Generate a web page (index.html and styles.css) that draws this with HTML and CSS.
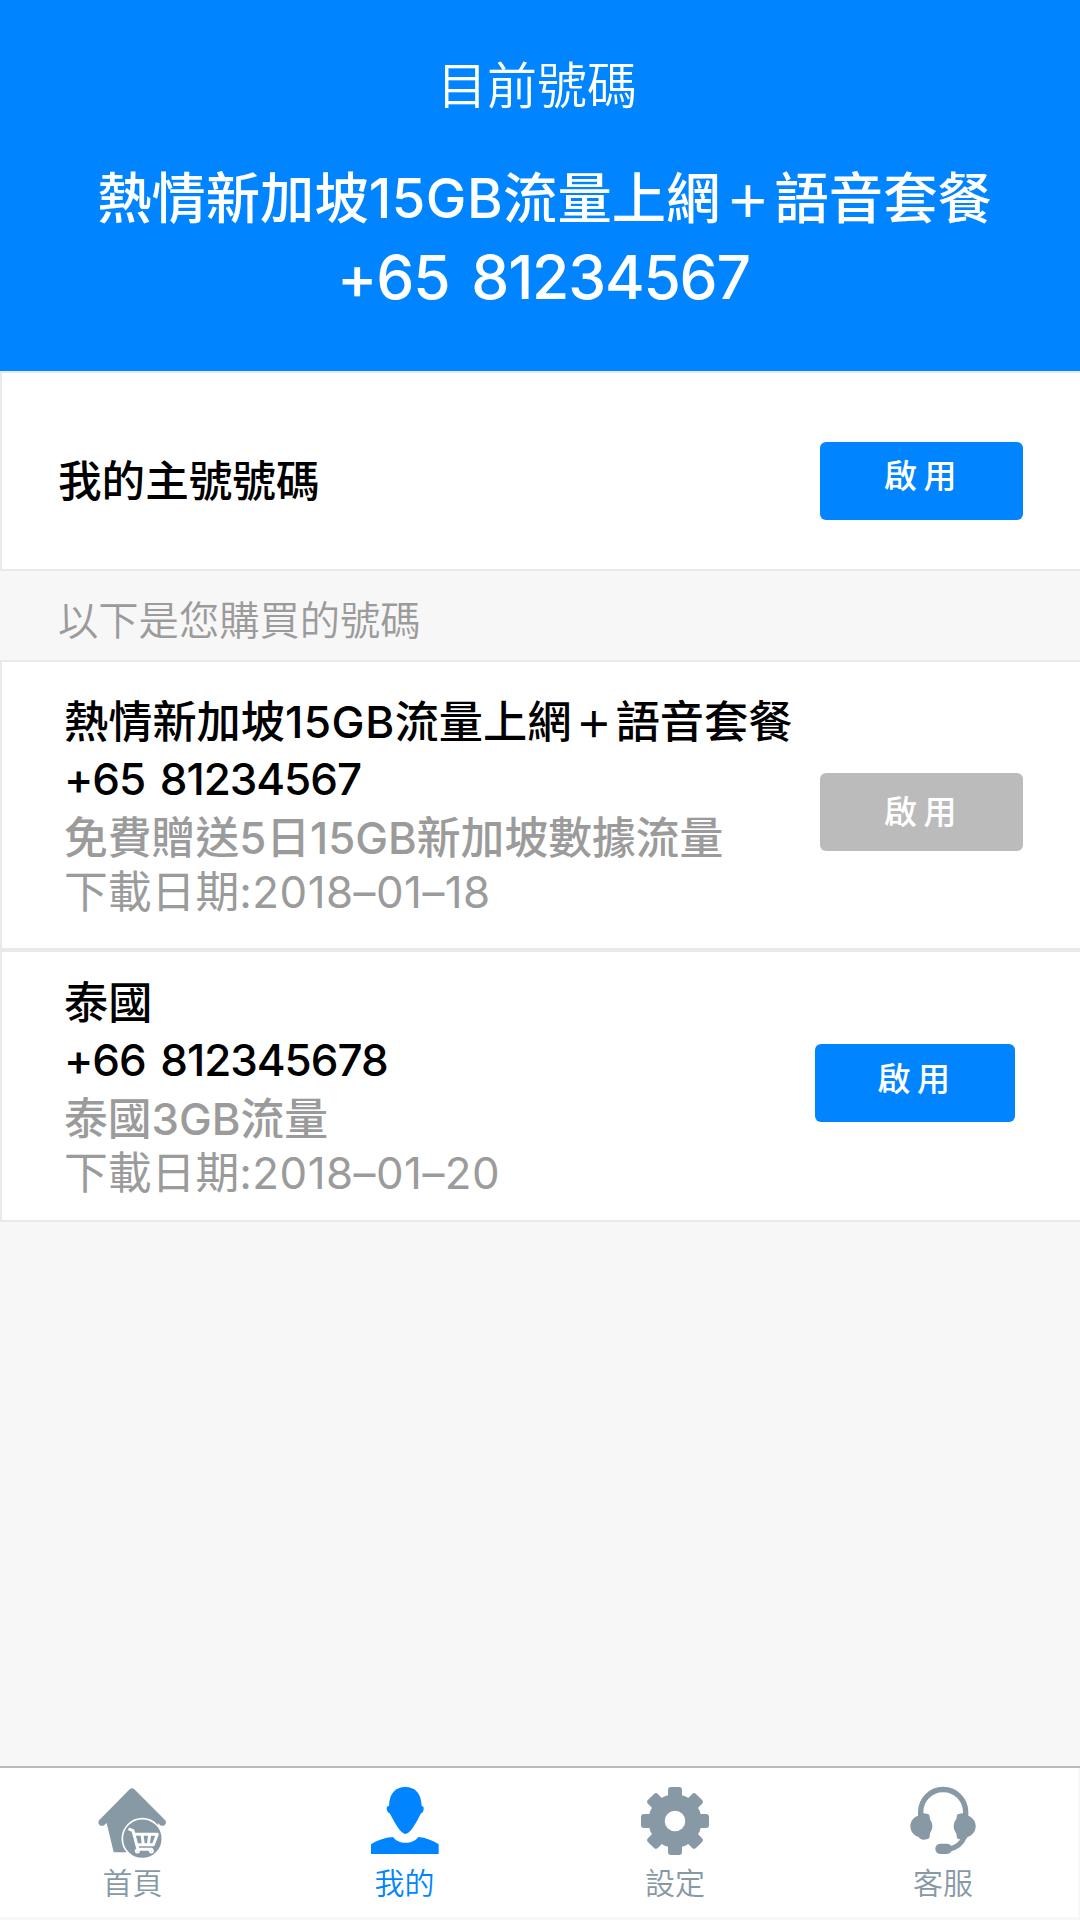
FILE: index.html
```html
<!DOCTYPE html>
<html lang="zh-Hant">

<head>
  <meta charset="UTF-8">
  <meta name="viewport" content="width=device-width, initial-scale=1.0">
  <title>我的號碼</title>
  <link rel="stylesheet" href="styles.css">
</head>

<body>
  <header class="current">
    <h1>目前號碼</h1>
    <p class="current-plan">熱情新加坡<span class="latin">15GB</span>流量上網<span class="plus">＋</span>語音套餐</p>
    <p class="current-number">+65 81234567</p>
  </header>

  <main>
    <section class="card main-number">
      <h2>我的主號號碼</h2>
      <button class="btn">啟用</button>
    </section>

    <p class="section-label">以下是您購買的號碼</p>

    <section class="card plan">
      <div class="plan-info">
        <h2>熱情新加坡<span class="latin">15GB</span>流量上網<span class="plus">＋</span>語音套餐</h2>
        <p class="phone">+65 81234567</p>
        <p class="desc">免費贈送5日15GB新加坡數據流量</p>
        <p class="date">下載日期<span class="latin">:2018–01–18</span></p>
      </div>
      <button class="btn btn-disabled" disabled>啟用</button>
    </section>

    <section class="card plan plan-last">
      <div class="plan-info">
        <h2>泰國</h2>
        <p class="phone">+66 812345678</p>
        <p class="desc">泰國3GB流量</p>
        <p class="date">下載日期<span class="latin">:2018–01–20</span></p>
      </div>
      <button class="btn">啟用</button>
    </section>
  </main>

  <nav class="tabbar">
    <a class="tab">
      <svg class="icon" viewBox="2 0 204 204" fill="currentColor">
        <path d="M94 7Q101 1 108 7L200 99Q206 106 200 113Q192 120 184 113L180 108L170 196H46L25 108L19 113Q11 120 3 113Q-3 106 3 99Z" />
        <circle class="ring" cx="132" cy="155" r="60" />
        <g class="cart">
          <path d="M94 127L104 131L119 187" />
          <path d="M108 142H177L165 173H116M131 143L135 172M154 143L150 172" />
          <path d="M119 187H160" />
          <circle cx="117" cy="192" r="3" />
          <circle cx="159" cy="192" r="3" />
        </g>
      </svg>
      <span>首頁</span>
    </a>
    <a class="tab active">
      <svg class="icon" viewBox="0 0 204 204" fill="currentColor">
        <path d="M103 0C74 0 55 18 54 57C48 57 47 60 47 65C48 73 51 77 56 79C69 102 88 141 103 141C119 141 138 102 150 79C155 77 158 73 158 65C158 60 157 57 152 57C151 18 132 0 103 0Z" />
        <path d="M0 172C18 160 40 152 66 150C81 173 127 173 142 150C164 152 185 160 203 172V201H0Z" />
      </svg>
      <span>我的</span>
    </a>
    <a class="tab">
      <svg class="icon" viewBox="0 0 204 204" fill="currentColor">
        <circle cx="102" cy="102" r="80" />
        <rect x="81" y="0" width="42" height="204" rx="9" />
        <rect x="81" y="0" width="42" height="204" rx="9" transform="rotate(45 102 102)" />
        <rect x="81" y="0" width="42" height="204" rx="9" transform="rotate(90 102 102)" />
        <rect x="81" y="0" width="42" height="204" rx="9" transform="rotate(135 102 102)" />
        <circle cx="102" cy="102" r="31" fill="#fff" />
      </svg>
      <span>設定</span>
    </a>
    <a class="tab">
      <svg class="icon" viewBox="-4 0 204 204" fill="currentColor">
        <path d="M31 88V75A67.500 67.500 0 0 1 166 75V88" fill="none" stroke="currentColor" stroke-width="16" />
        <rect x="22" y="79" width="36" height="79" rx="17" />
        <circle cx="33" cy="118" r="33" />
        <rect x="38" y="80" width="20" height="77" rx="10" />
        <rect x="139" y="79" width="36" height="79" rx="17" />
        <rect x="139" y="80" width="20" height="77" rx="10" />
        <circle cx="163" cy="118" r="33" />
        <path d="M162 150C153 172 139 181 118 186" fill="none" stroke="currentColor" stroke-width="15" />
        <rect x="75" y="170" width="50" height="31" rx="15" />
      </svg>
      <span>客服</span>
    </a>
  </nav>
</body>

</html>
```
FILE: styles.css
```css
:root {
  --blue: #0084ff;
  --grey-bg: #f7f7f7;
  --grey-text: #9b9b9b;
  --border: #e9e9e9;
  --tab: #8799a5;
}

* {
  margin: 0;
  padding: 0;
  box-sizing: border-box;
}

body {
  width: 1080px;
  height: 1920px;
  display: flex;
  flex-direction: column;
  background: var(--grey-bg);
  font-family: Inter, 'Noto Sans CJK TC', sans-serif;
  font-feature-settings: "calt" 0;
  color: #000;
  white-space: nowrap;
  overflow: hidden;
}

/* header */
.current {
  height: 371px;
  padding-top: 51px;
  background: var(--blue);
  color: #fff;
  text-align: center;
}

.current h1 {
  font-size: 50px;
  font-weight: 350;
  line-height: 70px;
  padding-right: 6px;
}

.current-plan {
  margin-top: 42px;
  padding-left: 9px;
  font-size: 54.3px;
  font-weight: 500;
  line-height: 70px;
}

.current-number {
  margin-top: 9px;
  padding-left: 7px;
  font-size: 60.5px;
  font-weight: 500;
  letter-spacing: -1.2px;
  word-spacing: 7px;
  line-height: 70px;
}

.latin {
  letter-spacing: 0.5px;
}

/* full-width plus, drawn smaller inside its cell */
.plus {
  padding: 0 0.1em 0 0.12em;
  font-size: 0.82em;
  font-weight: 700;
  line-height: 1;
}

/* cards */
main {
  flex: 1;
}

.card {
  display: flex;
  align-items: flex-start;
  justify-content: space-between;
  background: #fff;
  border: 2px solid var(--border);
  border-right: none;
}

.card h2 {
  font-size: 44.2px;
  font-weight: 500;
  line-height: 57px;
}

.card.main-number {
  height: 200px;
  padding: 69px 57px 0 56px;
}

.main-number h2 {
  margin-top: 11px;
  font-size: 43.6px;
}

.section-label {
  height: 89px;
  padding: 20px 0 0 58px;
  font-size: 40.3px;
  font-weight: 350;
  line-height: 60px;
  color: var(--grey-text);
}

.plan {
  height: 290px;
  padding: 32px 57px 0 62px;
}

.plan-last {
  height: 272px;
  padding: 23px 65px 0 62px;
}

.phone {
  font-size: 44px;
  font-weight: 500;
  letter-spacing: -1.05px;
  word-spacing: 4px;
  line-height: 57px;
}

.desc,
.date {
  font-size: 43.8px;
  font-weight: 500;
  line-height: 61px;
  color: var(--grey-text);
}

.date {
  font-weight: 400;
  line-height: 47px;
}

.btn {
  width: 203px;
  height: 78px;
  padding: 0 0 14px 4px;
  border: none;
  border-radius: 6px;
  background: var(--blue);
  color: #fff;
  font-family: inherit;
  font-size: 33px;
  font-weight: 500;
  letter-spacing: 6.5px;
}

.btn-disabled {
  margin-top: 79px;
  padding-bottom: 5px;
  background: #bbb;
}

.plan-last .btn {
  width: 200px;
  margin-top: 69px;
  padding-bottom: 12px;
}

/* bottom tabs */
.tabbar {
  display: grid;
  grid-template-columns: 265px 279px 262px 274px;
  height: 151px;
  margin-bottom: 3px;
  background: #fff;
  border-top: 2px solid #b9b9b9;
  box-shadow: inset -2px 0 var(--grey-bg);
}

.tab {
  display: flex;
  flex-direction: column;
  align-items: center;
  gap: 10px;
  padding-top: 19px;
  color: var(--tab);
  font-size: 30px;
  font-weight: 350;
  line-height: 36px;
}

.tab.active {
  color: var(--blue);
}

.icon {
  width: 68px;
  height: 68px;
  overflow: visible;
}

.ring {
  stroke: #fff;
  stroke-width: 5;
}

.cart {
  fill: none;
  stroke: #fff;
  stroke-width: 9;
  stroke-linecap: round;
  stroke-linejoin: round;
}
```
